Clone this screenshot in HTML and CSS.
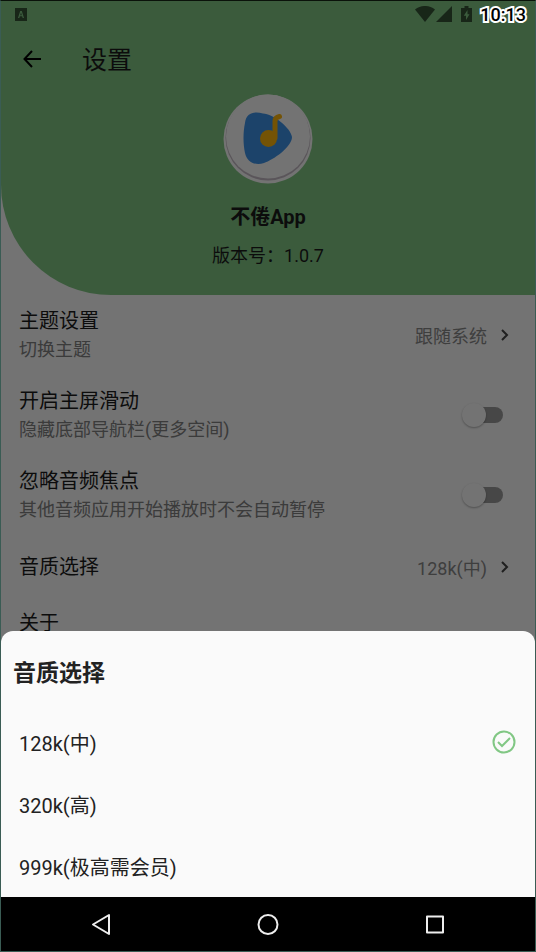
FILE: index.html
```html
<!DOCTYPE html>
<html lang="zh-CN">
<head>
<meta charset="utf-8">
<meta name="viewport" content="width=device-width, initial-scale=1">
<title>设置</title>
<link rel="stylesheet" href="styles.css">
</head>
<body>
<div class="device">
  <div class="screen">
    <header class="hero">
      <div class="status">
        <svg class="status-app" viewBox="0 0 12 13" aria-hidden="true"><path fill-rule="evenodd" d="M0 0h12v13H0zM5.2 3 3 10h1.300l.5-1.700h2.400l.5 1.700H9L6.800 3zM6 4.500l.8 2.700H5.200z"/></svg>
        <svg class="status-wifi" viewBox="0 0 20 16" aria-hidden="true"><path d="M10 16 0 3.500C6-1.200 14-1.200 20 3.500z"/></svg>
        <svg class="status-cell" viewBox="0 0 16 16" aria-hidden="true"><path d="M16 0v16H0z"/></svg>
        <svg class="status-battery" viewBox="0 0 11 16" aria-hidden="true"><path fill-rule="evenodd" d="M3.500 0h4v2H11v14H0V2h3.500zM6.500 4 2.800 9.800H5V14l3.500-5.800H6.500z"/></svg>
      </div>
      <div class="appbar">
        <button class="back" type="button" aria-label="返回">
          <svg viewBox="0 0 18 18" aria-hidden="true"><path d="M18 9H1.500M9 1 1.500 9 9 17"/></svg>
        </button>
        <h1 class="page-title">设置</h1>
      </div>
      <div class="about">
        <svg class="logo" viewBox="0 0 90 90" aria-hidden="true">
          <circle cx="45" cy="45" r="44.500" fill="#fafafa"/>
          <circle cx="45" cy="44" r="42.500" fill="#c4bac4"/>
          <circle cx="45" cy="42.500" r="42" fill="#fafafa"/>
          <path fill="#3e93e8" d="M22 29C23 19 31 17 40 19.500C50 20 68 34 69 43C69 53 50 66 41 69C32 72 24 68 22 59C20 50 20 38 22 29Z"/>
          <circle cx="45.500" cy="44.500" r="8.500" fill="#fcb50c"/>
          <path fill="none" stroke="#fcb50c" stroke-width="5" stroke-linecap="round" stroke-linejoin="round" d="M52 44V27Q52 23.500 56.500 22.500"/>
        </svg>
        <h2 class="app-name">不倦App</h2>
        <p class="version">版本号：1.0.7</p>
      </div>
    </header>
    <main class="settings">
      <button class="row" type="button">
        <span class="text"><span class="label">主题设置</span><span class="hint">切换主题</span></span>
        <span class="value">跟随系统</span>
        <svg class="chevron" viewBox="0 0 8 12" aria-hidden="true"><path d="M1 1l5 5-5 5"/></svg>
      </button>
      <label class="row">
        <span class="text"><span class="label">开启主屏滑动</span><span class="hint">隐藏底部导航栏(更多空间)</span></span>
        <input class="switch" type="checkbox">
      </label>
      <label class="row">
        <span class="text"><span class="label">忽略音频焦点</span><span class="hint">其他音频应用开始播放时不会自动暂停</span></span>
        <input class="switch" type="checkbox">
      </label>
      <button class="row row-single" type="button">
        <span class="text"><span class="label">音质选择</span></span>
        <span class="value">128k(中)</span>
        <svg class="chevron" viewBox="0 0 8 12" aria-hidden="true"><path d="M1 1l5 5-5 5"/></svg>
      </button>
      <button class="row row-short" type="button">
        <span class="text"><span class="label">关于</span></span>
      </button>
    </main>
    <div class="scrim"></div>
    <time class="clock">10:13</time>
    <section class="sheet" role="dialog" aria-labelledby="sheet-title">
      <h2 class="sheet-title" id="sheet-title">音质选择</h2>
      <button class="option" type="button">128k(中)
        <svg class="check" viewBox="0 0 24 24" aria-hidden="true"><circle cx="12" cy="12" r="10.500"/><path d="M6 12l4 4 8-8"/></svg>
      </button>
      <button class="option" type="button">320k(高)</button>
      <button class="option" type="button">999k(极高需会员)</button>
    </section>
  </div>
  <nav class="navbar">
    <button type="button" aria-label="后退"><svg viewBox="0 0 24 24" aria-hidden="true"><path d="M20 3v19L4 12.500z"/></svg></button>
    <button type="button" aria-label="主页"><svg viewBox="0 0 24 24" aria-hidden="true"><circle cx="12" cy="12.500" r="9.500"/></svg></button>
    <button type="button" aria-label="最近任务"><svg viewBox="0 0 24 24" aria-hidden="true"><path d="M4 4.500h16v16H4z"/></svg></button>
  </nav>
</div>
</body>
</html>
```
FILE: styles.css
```css
* { box-sizing: border-box; }

body {
  margin: 0;
  background: #000;
  color: #1c1c1c;
  font-family: Roboto, "Noto Sans CJK SC", sans-serif;
}

h1, h2, p { margin: 0; font-weight: 400; }

button {
  padding: 0;
  border: 0;
  background: none;
  color: inherit;
  font: inherit;
  text-align: left;
}

svg { display: block; flex: none; }

.device {
  display: flex;
  flex-direction: column;
  height: 100vh;
  border: 1px solid #3a5c54;
  border-top-color: #0a120a;
}

.screen {
  position: relative;
  flex: 1;
  min-height: 0;
  overflow: hidden;
  background: #fafafa;
}

.hero {
  padding-bottom: 27px;
  border-bottom-left-radius: 110px;
  background: #81c784;
}

.status {
  display: flex;
  align-items: center;
  height: 26px;
  padding: 0 63px 0 14px;
  fill: #355336;
}

.status-app { width: 12px; height: 13px; margin-right: auto; }
.status-wifi { width: 20px; height: 16px; }
.status-cell { width: 16px; height: 16px; margin-left: 1px; }
.status-battery { width: 11px; height: 16px; margin-left: 9px; }

.clock {
  position: absolute;
  top: 4px;
  right: 9px;
  color: #000;
  font-size: 18px;
  font-weight: 500;
  line-height: 20px;
  paint-order: stroke fill;
  -webkit-text-stroke: 4px #fff;
}

.appbar {
  display: flex;
  align-items: center;
  gap: 41px;
  height: 64px;
  padding-left: 22px;
}

.back svg {
  width: 18px;
  height: 18px;
  fill: none;
  stroke: #000;
  stroke-width: 2;
}

.page-title { padding-top: 4px; font-size: 25px; line-height: 32px; }

.about {
  display: flex;
  flex-direction: column;
  align-items: center;
  padding-top: 3px;
}

.logo { width: 90px; height: 90px; }

.app-name {
  margin-top: 19px;
  font-size: 20px;
  font-weight: 700;
  line-height: 28px;
}

.version { margin-top: 13px; font-size: 18px; line-height: 24px; }

.row {
  display: flex;
  align-items: center;
  width: 100%;
  height: 80px;
  padding: 0 26px 0 18px;
}

.row-single { height: 64px; }
.row-short { height: 48px; }

.text { display: flex; flex: 1; flex-direction: column; }
.label { font-size: 20px; line-height: 30px; }
.hint { color: #808080; font-size: 18px; line-height: 28px; }
.value { padding-top: 4px; color: #888; font-size: 18px; line-height: 24px; }

.chevron {
  width: 8px;
  height: 12px;
  margin-left: 14px;
  fill: none;
  stroke: #444;
  stroke-width: 2;
}

.switch {
  position: relative;
  appearance: none;
  width: 36px;
  height: 16px;
  margin: 0 6px 0 0;
  border-radius: 8px;
  background: #9b9b9b;
}

.switch::before {
  content: "";
  position: absolute;
  top: -4px;
  left: -5px;
  width: 24px;
  height: 24px;
  border-radius: 50%;
  background: #fafafa;
  box-shadow: 0 1px 2px rgba(0, 0, 0, 0.3);
}

.scrim {
  position: absolute;
  inset: 0;
  background: rgba(0, 0, 0, 0.54);
}

.sheet {
  position: absolute;
  right: 0;
  bottom: 0;
  left: 0;
  border-radius: 12px 12px 0 0;
  background: #fafafa;
  color: #222;
}

.sheet-title {
  padding: 27px 12px 21px;
  font-size: 23px;
  font-weight: 700;
  line-height: 32px;
}

.option {
  display: flex;
  align-items: center;
  justify-content: space-between;
  width: 100%;
  height: 62px;
  padding: 0 19px 0 18px;
  font-size: 20px;
}

.check {
  width: 24px;
  height: 24px;
  fill: none;
  stroke: #81c784;
  stroke-width: 2;
}

.navbar {
  display: flex;
  align-items: center;
  justify-content: space-around;
  height: 54px;
  padding: 0 17px;
  background: #000;
}

.navbar svg {
  width: 24px;
  height: 24px;
  fill: none;
  stroke: #eee;
  stroke-width: 2;
  stroke-linejoin: round;
}
```
